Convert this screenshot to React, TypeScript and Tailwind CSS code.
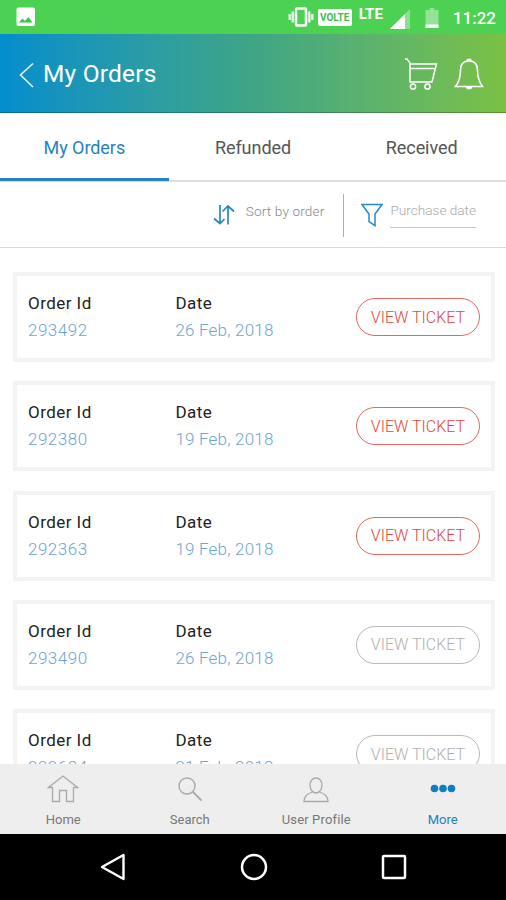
type Order = { id: string; date: string; active: boolean };

const orders: Order[] = [
  { id: '293492', date: '26 Feb, 2018', active: true },
  { id: '292380', date: '19 Feb, 2018', active: true },
  { id: '292363', date: '19 Feb, 2018', active: true },
  { id: '293490', date: '26 Feb, 2018', active: false },
  { id: '292684', date: '21 Feb, 2018', active: false },
];

function StatusBar() {
  return (
    <div className="flex h-[34px] shrink-0 items-center bg-[#4cd152] pl-4 pr-[10px] text-white">
      <svg width="20" height="20" viewBox="0 0 20 20">
        <rect x="0.5" y="0.5" width="18.5" height="18.5" rx="2" fill="#fff" />
        <path d="M3 15.5L6.5 11.5L9 14L12.5 10L16.5 15.5Z" fill="#36c544" />
      </svg>
      <svg className="ml-auto" width="26" height="20" viewBox="0 0 26 20">
        <rect x="8" y="1.5" width="10" height="17" rx="1" fill="none" stroke="#fff" strokeWidth="2.5" />
        <path d="M4.7 4.5v11M21.3 4.5v11M1.7 7v6M24.3 7v6" stroke="#fff" strokeWidth="2.4" opacity="0.85" />
      </svg>
      <span className="ml-[4px] flex h-[17px] w-[34px] items-center justify-center rounded-[2px] bg-white text-[10px] font-bold text-[#3fbf48]">
        VOLTE
      </span>
      <span className="ml-[7px] mb-[7px] text-[15px] leading-4 font-bold">LTE</span>
      <svg className="ml-[7px] mt-[3px]" width="20" height="20" viewBox="0 0 20 20">
        <path d="M0 20L20 0V20Z" fill="#fff" opacity="0.35" />
        <path d="M0 20L15 5V20Z" fill="#fff" />
      </svg>
      <svg className="mt-[2px] ml-[15px]" width="14" height="20" viewBox="0 0 14 20">
        <path d="M0.5 2h4V0h5v2h4v18h-13z" fill="#fff" opacity="0.4" />
        <path d="M0.5 16.5h13V20h-13z" fill="#fff" />
      </svg>
      <span className="mt-[3px] ml-[14px] text-[17px] font-medium">11:22</span>
    </div>
  );
}

function Header() {
  return (
    <header className="flex h-[79px] shrink-0 items-center border-b border-black/25 bg-linear-to-r from-[#048dcd] via-[#3fa585] to-[#7bc142] pl-[19px] pr-[22px] text-white">
      <svg className="mt-[4px]" width="15" height="26" viewBox="0 0 15 26" fill="none" stroke="#e6f4fa" strokeWidth="1.6">
        <path d="M14 1.5L1.5 13L14 25" />
      </svg>
      <h1 className="mt-[3px] ml-[9px] text-[24.5px] tracking-[0.2px]">My Orders</h1>
      <svg className="mt-[1px] ml-auto" width="34" height="32" viewBox="0 0 34 32" fill="none" stroke="#fff" strokeWidth="1.5">
        <path d="M1 1H3L6 5V24H28L32.5 6H5.5M6 10.5H30.5" />
        <circle cx="9" cy="28.5" r="2.6" />
        <circle cx="23.5" cy="28.5" r="2.6" />
      </svg>
      <svg className="mt-[1px] ml-[16px]" width="30" height="32" viewBox="0 0 30 32" fill="none" stroke="#fff" strokeWidth="1.6">
        <path d="M15 3C9 3 6.5 7 6.5 12C6.5 20 5 24 1.5 28.5H28.5C25 24 23.5 20 23.5 12C23.5 7 21 3 15 3Z" />
        <path d="M12 3.5a3 3 0 0 1 6 0zM12 29h6a3 2.5 0 0 1-6 0z" fill="#fff" stroke="none" />
      </svg>
    </header>
  );
}

function Tabs() {
  return (
    <nav className="grid h-[69px] shrink-0 grid-cols-3 border-b-2 border-[#dedede] text-[18px] tracking-[-0.05px] text-[#555]">
      <div className="-mb-px flex items-center justify-center border-b-3 border-[#2482c0] pt-[3px] text-[#2583c2]">My Orders</div>
      <div className="flex items-center justify-center pt-px">Refunded</div>
      <div className="flex items-center justify-center pt-px">Received</div>
    </nav>
  );
}

function Filters() {
  return (
    <div className="flex h-[66px] shrink-0 items-center justify-end border-b border-[#d5d9da] pr-[30px] text-[13.6px] font-light text-[#888]">
      <svg width="22" height="22" viewBox="0 0 22 22" fill="none" stroke="#2489bf" strokeWidth="1.7">
        <path d="M7 1V19.5M1 14.5L7 19.5L11.5 15M15 20.5V2M9.5 7.5L15 2L21 7.5" />
      </svg>
      <span className="ml-[11px] mb-[7px] tracking-[0.15px]">Sort by order</span>
      <div className="mt-[2px] ml-[19px] h-[43px] w-px bg-[#9cb3b7]" />
      <svg className="ml-[17px]" width="22" height="24" viewBox="0 0 22 24" fill="none" stroke="#2489c9" strokeWidth="1.5">
        <path d="M1 1.5H21L14 11V22.5L8 18.5V11Z" />
      </svg>
      <span className="ml-[7px] mb-[2px] h-[28px] border-b border-[#c3c8c8] text-[#aaa]">Purchase date</span>
    </div>
  );
}

function OrderCard({ order }: { order: Order }) {
  return (
    <div className="flex h-[90px] shrink-0 items-center border-4 border-[#f3f3f3] bg-white pl-[11px] pr-[11px] text-[17px] leading-[27px]">
      <div className="w-[146px]">
        <p className="tracking-[0.45px] text-[#222]">Order Id</p>
        <p className="font-light tracking-[0.5px] text-[#6ea3d5]">{order.id}</p>
      </div>
      <div className="flex w-[101px] justify-center">
        <div>
          <p className="tracking-[0.45px] text-[#222]">Date</p>
          <p className="font-light tracking-[0.2px] text-[#6ea3d5]">{order.date}</p>
        </div>
      </div>
      <button
        className={`ml-auto h-[38px] w-[124px] rounded-full border text-[16px] font-light ${
          order.active ? 'border-[#e4675d] text-[#e0473c]' : 'border-[#b9b9b9] text-[#b0b0b0]'
        }`}
      >
        VIEW TICKET
      </button>
    </div>
  );
}

function BottomNav() {
  return (
    <nav className="grid h-[70px] shrink-0 grid-cols-4 bg-[#eee] pt-[10px] text-[13px] text-[#777]">
      <div className="flex flex-col items-center gap-[6px]">
        <svg width="32" height="30" viewBox="0 0 32 30" fill="none" stroke="#aaa" strokeWidth="1.3">
          <path d="M5.5 13.5H1.5L16 2L30.5 13.5H26.5V27.5H19.5V16.5H12.5V27.5H5.5Z" />
        </svg>
        Home
      </div>
      <div className="flex flex-col items-center gap-[6px]">
        <svg width="26" height="30" viewBox="0 0 26 30" fill="none" stroke="#aaa" strokeWidth="1.4">
          <circle cx="10" cy="12" r="8" />
          <path d="M15.5 17.5L24.5 26.5" strokeWidth="1.8" />
        </svg>
        Search
      </div>
      <div className="flex flex-col items-center gap-[6px]">
        <svg width="26" height="30" viewBox="0 0 26 30" fill="none" stroke="#aaa" strokeWidth="1.3">
          <path d="M13 4C9.5 4 7 7 7 11C7 15 9.5 19 13 19C16.5 19 19 15 19 11C19 7 16.5 4 13 4Z" />
          <path d="M9.5 18C4 20 1 22 1 27.5H25C25 22 22 20 16.5 18" />
        </svg>
        <span className="tracking-[0.15px]">User Profile</span>
      </div>
      <div className="flex flex-col items-center gap-[6px] text-[#1b7fbf]">
        <svg width="26" height="30" viewBox="0 0 26 30" fill="#0d7dc5">
          <circle cx="4.5" cy="14.5" r="3.8" />
          <circle cx="13" cy="14.5" r="3.8" />
          <circle cx="21.5" cy="14.5" r="3.8" />
        </svg>
        More
      </div>
    </nav>
  );
}

function AndroidBar() {
  return (
    <div className="flex h-[66px] shrink-0 items-center justify-between bg-black pl-[100px] pr-[99px]">
      <svg width="26" height="28" viewBox="0 0 26 28" fill="none" stroke="#fff" strokeWidth="2.4" strokeLinejoin="round">
        <path d="M23.5 2V26L2 14Z" />
      </svg>
      <svg width="28" height="28" viewBox="0 0 28 28" fill="none" stroke="#fff" strokeWidth="2.5">
        <circle cx="14" cy="14" r="12" />
      </svg>
      <svg width="26" height="26" viewBox="0 0 26 26" fill="none" stroke="#fff" strokeWidth="2.5">
        <rect x="2" y="2" width="22" height="22" rx="1" />
      </svg>
    </div>
  );
}

export default function App() {
  return (
    <div className="flex h-[900px] w-[506px] flex-col overflow-hidden bg-white font-['Roboto',sans-serif]">
      <StatusBar />
      <Header />
      <Tabs />
      <Filters />
      <main className="flex min-h-0 flex-1 flex-col gap-[19.25px] overflow-hidden pt-[24px] pr-[11px] pl-[13px]">
        {orders.map((order) => (
          <OrderCard key={order.id} order={order} />
        ))}
      </main>
      <BottomNav />
      <AndroidBar />
    </div>
  );
}
